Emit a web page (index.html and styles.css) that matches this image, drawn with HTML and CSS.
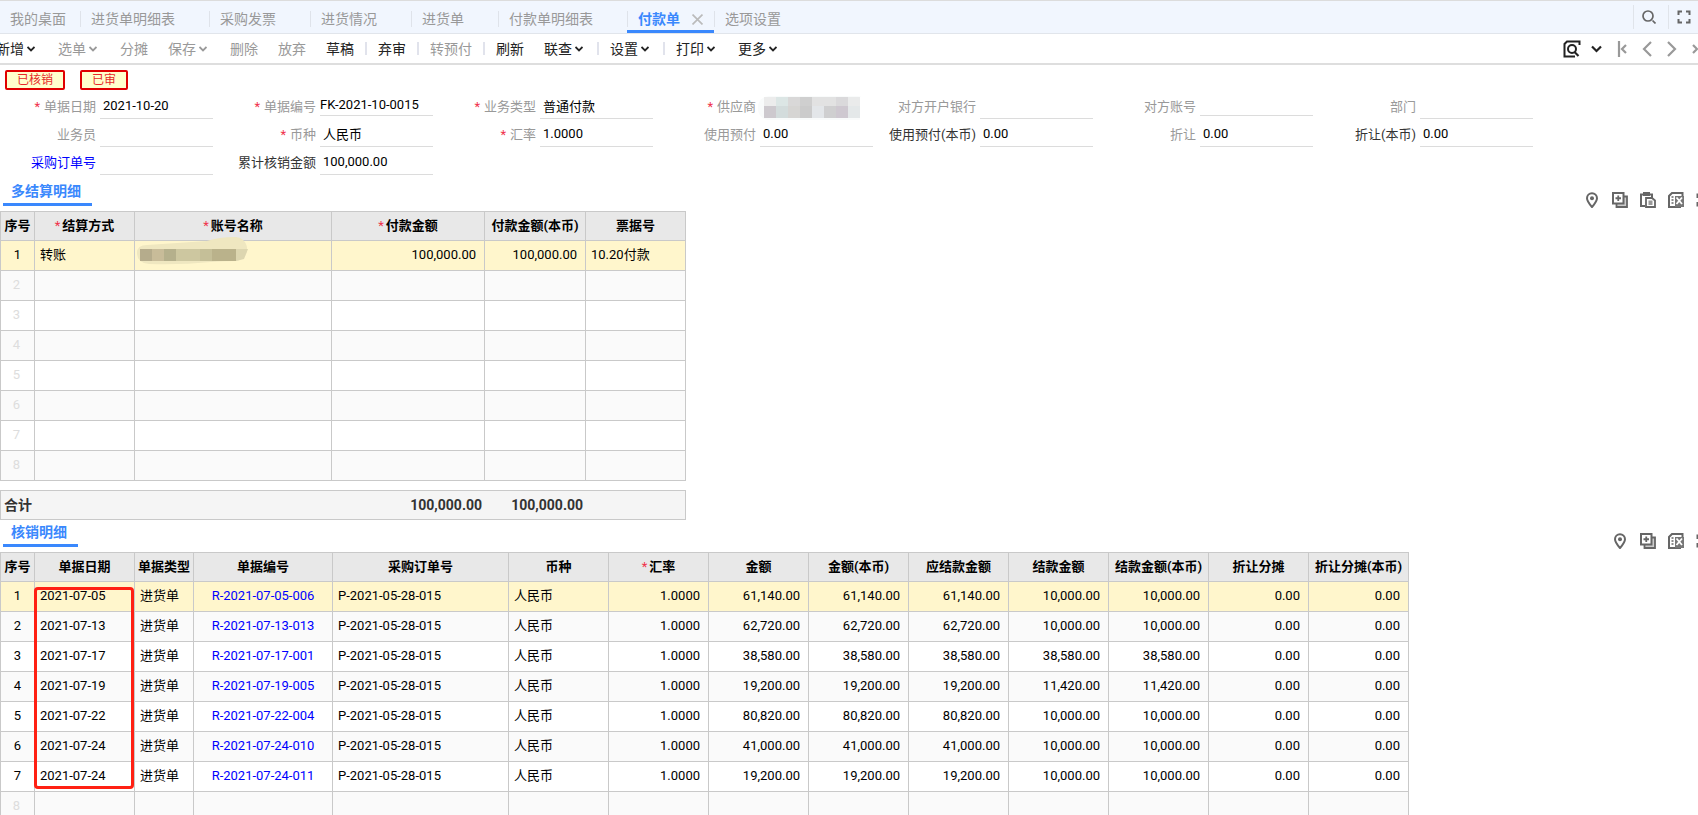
FILE: index.html
```html
<!DOCTYPE html>
<html lang="zh-CN">
<head>
<meta charset="utf-8">
<title>付款单</title>
<link rel="stylesheet" href="styles.css">
</head>
<body>
<svg class="defs" aria-hidden="true">
  <symbol id="caret" viewBox="0 0 8 6"><path d="M0.5 1l3.500 3.500L7.500 1" fill="none" stroke="currentColor" stroke-width="1.800"/></symbol>
  <symbol id="pin" viewBox="0 0 16 16"><path d="M8 15C5 11.500 3 9 3 6.200a5 5 0 0 1 10 0C13 9 11 11.500 8 15z" fill="none" stroke="currentColor" stroke-width="2"/><circle cx="8" cy="6.300" r="2" fill="currentColor"/></symbol>
  <symbol id="addrow" viewBox="0 0 16 16"><path d="M12 4.500h3v10.500H4.500v-3" fill="#ccc" stroke="currentColor" stroke-width="1.800"/><path d="M1 1h10.500v10.500H1z" fill="#fff" stroke="currentColor" stroke-width="2"/><path d="M6.250 3.500v5.500M3.500 6.250h5.500" stroke="currentColor" stroke-width="1.800"/></symbol>
  <symbol id="paste" viewBox="0 0 16 16"><path d="M5 14H1V2.500h11V6" fill="none" stroke="currentColor" stroke-width="2"/><path d="M3 0h7v4H3z" fill="currentColor"/><path d="M6 6h6l3 2.500V15H6z" fill="#fff" stroke="currentColor" stroke-width="1.800"/><path d="M8.500 8.500h4V13h-4z" fill="#999"/></symbol>
  <symbol id="delrow" viewBox="0 0 16 16"><path d="M13 15H1V4l3-3h10.500v3" fill="none" stroke="currentColor" stroke-width="2"/><path d="M3.500 5H5.500M3.500 8h2M3.500 11h2" stroke="currentColor" stroke-width="1.600"/><path d="M7 4h9v11H7z" fill="#777"/><path d="M8.500 5.500l5.500 6.500M14 5.500L8.500 12" stroke="#fff" stroke-width="1.800"/></symbol>
  <symbol id="full" viewBox="0 0 14 14"><path d="M5 1.500H1.500V5M9 1.500h3.500V5M5 12.500H1.500V9M9 12.500h3.500V9" fill="none" stroke="currentColor" stroke-width="2"/></symbol>
</svg>

<nav class="tabs">
  <button class="tab">我的桌面</button><button class="tab">进货单明细表</button><button class="tab">采购发票</button><button class="tab">进货情况</button><button class="tab">进货单</button><button class="tab">付款单明细表</button><button class="tab active">付款单<svg class="x" viewBox="0 0 10 10"><path d="M0.500 0.500l9 9M9.500 0.500l-9 9" stroke="#bbb" stroke-width="1.500"/></svg></button><button class="tab">选项设置</button>
  <div class="tab-tools">
    <button aria-label="搜索"><svg width="14" height="14" viewBox="0 0 14 14"><circle cx="6" cy="6" r="5" fill="none" stroke="currentColor" stroke-width="1.700"/><path d="M10.500 10.500l3 3" stroke="currentColor" stroke-width="1.700"/></svg></button>
    <button aria-label="全屏"><svg width="14" height="14"><use href="#full"/></svg></button>
  </div>
</nav>

<div class="toolbar">
  <div class="actions">
    <button>新增<svg class="caret"><use href="#caret"/></svg></button>
    <button class="off">选单<svg class="caret"><use href="#caret"/></svg></button>
    <button class="off">分摊</button>
    <button class="off">保存<svg class="caret"><use href="#caret"/></svg></button>
    <button class="off">删除</button>
    <button class="off">放弃</button>
    <button>草稿</button><i class="sep"></i>
    <button>弃审</button><i class="sep"></i>
    <button class="off">转预付</button><i class="sep"></i>
    <button>刷新</button>
    <button>联查<svg class="caret"><use href="#caret"/></svg></button><i class="sep"></i>
    <button>设置<svg class="caret"><use href="#caret"/></svg></button><i class="sep"></i>
    <button>打印<svg class="caret"><use href="#caret"/></svg></button>
    <button>更多<svg class="caret"><use href="#caret"/></svg></button>
  </div>
  <div class="pager">
    <button class="dark" aria-label="预览"><svg width="18" height="18" viewBox="0 0 18 18"><path d="M16.500 5V1.500H4L1.500 4v12.500H12" fill="none" stroke="currentColor" stroke-width="2"/><circle cx="9" cy="9" r="4" fill="none" stroke="currentColor" stroke-width="2"/><path d="M11.500 12l4 4" stroke="currentColor" stroke-width="2.200"/></svg></button>
    <button class="dark" aria-label="预览选项"><svg width="11" height="8" viewBox="0 0 11 8"><path d="M1 1.500l4.500 4.500L10 1.500" fill="none" stroke="currentColor" stroke-width="2.200"/></svg></button>
    <button aria-label="第一张"><svg width="10" height="16" viewBox="0 0 10 16"><path d="M2 0v16M9 4L5 8l4 4" fill="none" stroke="currentColor" stroke-width="2.200"/></svg></button>
    <button aria-label="上一张"><svg width="10" height="16" viewBox="0 0 10 16"><path d="M9 1L2 8l7 7" fill="none" stroke="currentColor" stroke-width="2.200"/></svg></button>
    <button aria-label="下一张"><svg width="10" height="16" viewBox="0 0 10 16"><path d="M1 1l7 7-7 7" fill="none" stroke="currentColor" stroke-width="2.200"/></svg></button>
    <button aria-label="最后一张"><svg width="10" height="16" viewBox="0 0 10 16"><path d="M8 0v16M1 4l4 4-4 4" fill="none" stroke="currentColor" stroke-width="2.200"/></svg></button>
  </div>
</div>

<div class="badges"><span class="badge">已核销</span><span class="badge">已审</span></div>

<form class="fields">
  <div class="field"><label for="f1"><b class="req">*</b>单据日期</label><input id="f1" value="2021-10-20"></div>
  <div class="field code"><label for="f2"><b class="req">*</b>单据编号</label><input id="f2" value="FK-2021-10-0015"></div>
  <div class="field"><label for="f3"><b class="req">*</b>业务类型</label><input id="f3" value="普通付款"></div>
  <div class="field masked"><label for="f4"><b class="req">*</b>供应商</label><input id="f4" value="">
    <svg class="mask" width="112" height="28" viewBox="0 0 112 28"><rect y="3" width="110" height="24" rx="11" fill="#f9fbfb"/><path d="M6 4h12v9H6z" fill="#ececec"/><path d="M18 4h12v9H18z" fill="#dce6e5"/><path d="M30 4h12v9H30z" fill="#d9d8d8"/><path d="M42 4h12v9H42z" fill="#cfcfcf"/><path d="M54 4h24v9H54z" fill="#e2e2e2"/><path d="M78 4h12v9H78z" fill="#dad9db"/><path d="M90 4h18v9H90z" fill="#eaebeb"/><path d="M6 13h12v12H6z" fill="#cdc9ce"/><path d="M18 13h12v12H18z" fill="#d3dcdc"/><path d="M30 13h12v12H30z" fill="#d6d5d3"/><path d="M42 13h12v12H42z" fill="#cbcbcb"/><path d="M54 13h12v12H54z" fill="#e3e6e9"/><path d="M66 13h12v12H66z" fill="#cfcfd0"/><path d="M78 13h12v12H78z" fill="#cec8d0"/><path d="M90 13h12v12H90z" fill="#e4e8e9"/><path d="M102 4h10v24h-10z" fill="#fff"/></svg></div>
  <div class="field"><label for="f5">对方开户银行</label><input id="f5"></div>
  <div class="field code"><label for="f6">对方账号</label><input id="f6"></div>
  <div class="field"><label for="f7">部门</label><input id="f7"></div>
  <div class="field"><label for="f8">业务员</label><input id="f8"></div>
  <div class="field"><label for="f9"><b class="req">*</b>币种</label><input id="f9" value="人民币"></div>
  <div class="field"><label for="f10"><b class="req">*</b>汇率</label><input id="f10" value="1.0000"></div>
  <div class="field"><label for="f11">使用预付</label><input id="f11" value="0.00"></div>
  <div class="field"><label class="dk" for="f12">使用预付(本币)</label><input id="f12" value="0.00"></div>
  <div class="field"><label for="f13">折让</label><input id="f13" value="0.00"></div>
  <div class="field"><label class="dk" for="f14">折让(本币)</label><input id="f14" value="0.00"></div>
  <div class="field"><label class="link" for="f15">采购订单号</label><input id="f15"></div>
  <div class="field"><label class="dk" for="f16">累计核销金额</label><input id="f16" value="100,000.00"></div>
</form>

<section>
  <header class="sec first">
    <button class="sec-tab">多结算明细</button>
    <div class="sec-tools">
      <button aria-label="定位"><svg><use href="#pin"/></svg></button><button aria-label="增行"><svg><use href="#addrow"/></svg></button><button aria-label="粘贴"><svg><use href="#paste"/></svg></button><button aria-label="删行"><svg><use href="#delrow"/></svg></button><button aria-label="放大"><svg class="sm"><use href="#full"/></svg></button>
    </div>
  </header>
  <table class="grid settle">
    <colgroup><col class="w34"><col class="w100"><col class="w197"><col class="w153"><col class="w101"><col class="w100"></colgroup>
    <thead><tr><th>序号</th><th><b class="req">*</b>结算方式</th><th><b class="req">*</b>账号名称</th><th><b class="req">*</b>付款金额</th><th>付款金额(本币)</th><th>票据号</th></tr></thead>
    <tbody>
      <tr class="sel"><td class="n">1</td><td>转账</td><td class="acct"><svg class="blur" width="114" height="30" viewBox="0 0 114 30"><path d="M2 16q0-8 10-8l60-4q12-4 27-4a12 12 0 0 1 2 24q-10 0-25 1-30 3-62 2-12-1-12-11z" fill="#efe7c0"/><path d="M5 12h12v12H5z" fill="#b5ac8c"/><path d="M17 12h12v12H17z" fill="#c8bc99"/><path d="M29 12h12v12H29z" fill="#b5b08c"/><path d="M41 12h24v12H41z" fill="#cdc7a0"/><path d="M65 12h12v12H65z" fill="#c5bf98"/><path d="M77 12h24v12H77z" fill="#bab28b"/><path d="M101 12h12l-4 10-8 2z" fill="#ddd6b0"/></svg></td><td class="r">100,000.00</td><td class="r">100,000.00</td><td>10.20付款</td></tr>
      <tr><td class="n e">2</td><td></td><td></td><td></td><td></td><td></td></tr>
      <tr><td class="n e">3</td><td></td><td></td><td></td><td></td><td></td></tr>
      <tr><td class="n e">4</td><td></td><td></td><td></td><td></td><td></td></tr>
      <tr><td class="n e">5</td><td></td><td></td><td></td><td></td><td></td></tr>
      <tr><td class="n e">6</td><td></td><td></td><td></td><td></td><td></td></tr>
      <tr><td class="n e">7</td><td></td><td></td><td></td><td></td><td></td></tr>
      <tr><td class="n e">8</td><td></td><td></td><td></td><td></td><td></td></tr>
    </tbody>
  </table>
  <table class="total settle">
    <colgroup><col class="w34"><col class="w100"><col class="w197"><col class="w153"><col class="w101"><col class="w100"></colgroup>
    <tbody><tr><td colspan="3">合计</td><td class="r">100,000.00</td><td class="r">100,000.00</td><td class="last"></td></tr></tbody>
  </table>
</section>

<section>
  <header class="sec">
    <button class="sec-tab">核销明细</button>
    <div class="sec-tools">
      <button aria-label="定位"><svg><use href="#pin"/></svg></button><button aria-label="增行"><svg><use href="#addrow"/></svg></button><button aria-label="删行"><svg><use href="#delrow"/></svg></button><button aria-label="放大"><svg class="sm"><use href="#full"/></svg></button>
    </div>
  </header>
  <div class="marked">
  <table class="grid writeoff">
    <colgroup><col class="w34"><col class="w100"><col class="w59"><col class="w139"><col class="w176"><col span="9" class="w100"></colgroup>
    <thead><tr><th>序号</th><th>单据日期</th><th>单据类型</th><th>单据编号</th><th>采购订单号</th><th>币种</th><th><b class="req">*</b>汇率</th><th>金额</th><th>金额(本币)</th><th>应结款金额</th><th>结款金额</th><th>结款金额(本币)</th><th>折让分摊</th><th>折让分摊(本币)</th></tr></thead>
    <tbody>
      <tr class="sel"><td class="n">1</td><td>2021-07-05</td><td>进货单</td><td class="c"><a href="#">R-2021-07-05-006</a></td><td>P-2021-05-28-015</td><td>人民币</td><td class="r">1.0000</td><td class="r">61,140.00</td><td class="r">61,140.00</td><td class="r">61,140.00</td><td class="r">10,000.00</td><td class="r">10,000.00</td><td class="r">0.00</td><td class="r">0.00</td></tr>
      <tr><td class="n">2</td><td>2021-07-13</td><td>进货单</td><td class="c"><a href="#">R-2021-07-13-013</a></td><td>P-2021-05-28-015</td><td>人民币</td><td class="r">1.0000</td><td class="r">62,720.00</td><td class="r">62,720.00</td><td class="r">62,720.00</td><td class="r">10,000.00</td><td class="r">10,000.00</td><td class="r">0.00</td><td class="r">0.00</td></tr>
      <tr><td class="n">3</td><td>2021-07-17</td><td>进货单</td><td class="c"><a href="#">R-2021-07-17-001</a></td><td>P-2021-05-28-015</td><td>人民币</td><td class="r">1.0000</td><td class="r">38,580.00</td><td class="r">38,580.00</td><td class="r">38,580.00</td><td class="r">38,580.00</td><td class="r">38,580.00</td><td class="r">0.00</td><td class="r">0.00</td></tr>
      <tr><td class="n">4</td><td>2021-07-19</td><td>进货单</td><td class="c"><a href="#">R-2021-07-19-005</a></td><td>P-2021-05-28-015</td><td>人民币</td><td class="r">1.0000</td><td class="r">19,200.00</td><td class="r">19,200.00</td><td class="r">19,200.00</td><td class="r">11,420.00</td><td class="r">11,420.00</td><td class="r">0.00</td><td class="r">0.00</td></tr>
      <tr><td class="n">5</td><td>2021-07-22</td><td>进货单</td><td class="c"><a href="#">R-2021-07-22-004</a></td><td>P-2021-05-28-015</td><td>人民币</td><td class="r">1.0000</td><td class="r">80,820.00</td><td class="r">80,820.00</td><td class="r">80,820.00</td><td class="r">10,000.00</td><td class="r">10,000.00</td><td class="r">0.00</td><td class="r">0.00</td></tr>
      <tr><td class="n">6</td><td>2021-07-24</td><td>进货单</td><td class="c"><a href="#">R-2021-07-24-010</a></td><td>P-2021-05-28-015</td><td>人民币</td><td class="r">1.0000</td><td class="r">41,000.00</td><td class="r">41,000.00</td><td class="r">41,000.00</td><td class="r">10,000.00</td><td class="r">10,000.00</td><td class="r">0.00</td><td class="r">0.00</td></tr>
      <tr><td class="n">7</td><td>2021-07-24</td><td>进货单</td><td class="c"><a href="#">R-2021-07-24-011</a></td><td>P-2021-05-28-015</td><td>人民币</td><td class="r">1.0000</td><td class="r">19,200.00</td><td class="r">19,200.00</td><td class="r">19,200.00</td><td class="r">10,000.00</td><td class="r">10,000.00</td><td class="r">0.00</td><td class="r">0.00</td></tr>
      <tr><td class="n e">8</td><td></td><td></td><td></td><td></td><td></td><td></td><td></td><td></td><td></td><td></td><td></td><td></td><td></td></tr>
    </tbody>
  </table>
  <div class="mark"></div>
  </div>
</section>
</body>
</html>
```

FILE: styles.css
```css
* { box-sizing: border-box; }
html { height: 100%; }
body {
  margin: 0;
  height: 100%;
  overflow: hidden;
  background: #fff;
  color: #000;
  font: 13px/18px Roboto, "Noto Sans CJK SC", sans-serif;
}
button { border: 0; background: none; padding: 0; font: inherit; color: inherit; white-space: nowrap; }
svg { display: block; flex: none; }
.defs { position: absolute; width: 0; height: 0; }
.req { color: #f0324b; font-weight: 400; }

.tabs {
  display: flex;
  height: 34px;
  background: #f1f6fe;
  border-top: 1px solid #dcdcdc;
  border-bottom: 1px solid #e1e5eb;
  font-size: 14px;
}
.tab {
  position: relative;
  display: flex;
  align-items: center;
  padding: 4px 34px 0 10px;
  color: #999;
}
.tab + .tab { padding-left: 11px; }
.tab:first-child { padding-right: 14px; }
.tab + .tab::before {
  content: "";
  position: absolute;
  left: 0;
  top: 10px;
  width: 1px;
  height: 16px;
  background: #dfe3ea;
}
.tab.active {
  padding: 4px 11px 0 11px;
  gap: 12px;
  color: #3a88fd;
  font-weight: 700;
  box-shadow: inset 0 -3px #3a88fd;
}
.tab .x { width: 11px; height: 11px; }
.tab-tools { display: flex; margin-left: auto; color: #666; }
.tab-tools button {
  width: 35px;
  height: 24px;
  margin-top: 4px;
  padding-left: 8px;
  border-left: 1px solid #e0e4ea;
}
.tab-tools button:last-child { width: 30px; }

.toolbar {
  display: flex;
  justify-content: space-between;
  height: 31px;
  overflow: hidden;
  border-bottom: 2px solid #dedede;
  font-size: 14px;
  color: #222;
}
.actions { display: flex; align-items: center; margin-left: -14px; }
.actions button { display: flex; align-items: center; padding: 0 10px; }
.actions .off { color: #999; }
.caret { width: 8px; height: 6px; margin: 0 3px; }
.sep { width: 2px; height: 13px; margin: 0 1px; background: #e1e3ec; }
.pager { display: flex; margin-right: -11px; color: #999; }
.pager button { display: flex; align-items: center; justify-content: center; width: 25px; }
.pager .dark { color: #222; }

.badges { display: flex; gap: 15px; padding: 5px 5px 1px; }
.badge {
  height: 20px;
  padding: 0 10px;
  border: 2px solid #e00000;
  border-radius: 2px;
  background: #ffc;
  color: #e62a2a;
  font-size: 12px;
  line-height: 16px;
}

.fields { display: grid; grid-template-columns: repeat(7, 220px); }
.field { display: flex; gap: 4px; height: 28px; }
.field label {
  width: 96px;
  flex: none;
  line-height: 31px;
  text-align: right;
  white-space: nowrap;
  color: #999;
}
.field label .req { margin-right: 4px; }
.field .dk { color: #333; }
.field .link { color: #00f; }
.field input {
  width: 113px;
  height: 28px;
  padding: 2px 0 0 3px;
  border: 0;
  border-bottom: 1px solid #dcdcdc;
  background: none;
  font: inherit;
  color: #000;
  outline: 0;
}
.field.code input { height: 25px; padding: 3px 0 0; }
.masked { position: relative; }
.masked input { border-color: transparent; }
.mask { position: absolute; left: 98px; top: 2px; }

.sec { display: flex; justify-content: space-between; height: 32px; overflow: hidden; }
.sec.first { margin-top: 4px; }
.sec-tab {
  height: 27px;
  margin-left: 3px;
  padding: 0 11px 0 8px;
  border-bottom: 3px solid #3a88fd;
  color: #3a88fd;
  font-size: 14px;
  font-weight: 700;
}
.sec-tools { display: flex; align-items: flex-end; margin-right: -20px; padding-bottom: 3px; color: #666; }
.sec-tools button { width: 28px; padding: 0 6px; }
.sec-tools svg { width: 16px; height: 16px; }
.sec-tools .sm { width: 14px; height: 14px; margin-bottom: 1px; }

table { table-layout: fixed; border-collapse: separate; border-spacing: 0; white-space: nowrap; }
.settle { width: 686px; }
.writeoff { width: 1409px; }
.w34 { width: 34px; }
.w59 { width: 59px; }
.w100 { width: 100px; }
.w101 { width: 101px; }
.w139 { width: 139px; }
.w153 { width: 153px; }
.w176 { width: 176px; }
.w197 { width: 197px; }
.grid { border-top: 1px solid #c9c9c9; border-left: 1px solid #c9c9c9; }
.grid th, .grid td { border-right: 1px solid #c9c9c9; border-bottom: 1px solid #c9c9c9; }
.grid th { height: 29px; padding: 0; background: #e8e8e8; font-weight: 700; }
.grid th .req { margin-right: 2px; }
.grid td { height: 30px; padding: 0 8px 1px 5px; }
.grid tbody tr:nth-child(even) { background: #fafafa; }
.grid tbody .sel { background: #fff6cc; }
.grid .n { padding: 0 0 1px; text-align: center; }
.grid .e { padding: 0 2px 2px 0; color: #ddd; }
.grid .c { padding: 0 0 1px; text-align: center; }
.grid a { color: #00f; text-decoration: none; }
.r { text-align: right; }
.acct { position: relative; }
.blur { position: absolute; left: 0; top: -4px; }

.total {
  margin-top: 9px;
  border: 1px solid #c9c9c9;
  border-right: 0;
  background: #f5f5f5;
  color: #333;
  font-size: 14px;
  font-weight: 700;
}
.total td { height: 28px; padding: 0 3px; }
.total .last { border-right: 1px solid #c9c9c9; }

.marked { position: relative; }
.mark {
  position: absolute;
  left: 34px;
  top: 35px;
  width: 100px;
  height: 202px;
  border: 3px solid #ff2013;
  border-radius: 4px;
}
```
